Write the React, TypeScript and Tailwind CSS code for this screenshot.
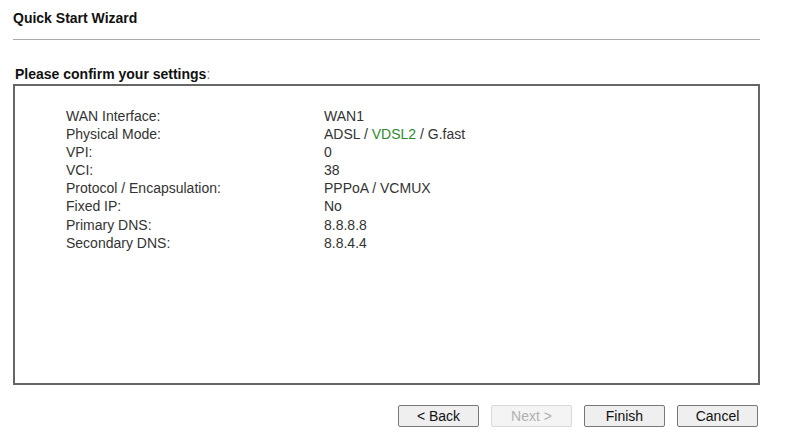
import React from "react";

const rows: { label: string; value: React.ReactNode }[] = [
  { label: "WAN Interface:", value: "WAN1" },
  {
    label: "Physical Mode:",
    value: (
      <>
        ADSL / <span className="text-[#2e8b2e]">VDSL2</span> / G.fast
      </>
    ),
  },
  { label: "VPI:", value: "0" },
  { label: "VCI:", value: "38" },
  { label: "Protocol / Encapsulation:", value: "PPPoA / VCMUX" },
  { label: "Fixed IP:", value: "No" },
  { label: "Primary DNS:", value: "8.8.8.8" },
  { label: "Secondary DNS:", value: "8.8.4.4" },
];

function Btn({ children, disabled }: { children: React.ReactNode; disabled?: boolean }) {
  return (
    <button
      disabled={disabled}
      className={
        disabled
          ? "h-[22px] w-[81px] rounded-[2px] border border-[#d8d8d8] bg-[#f4f4f4] text-[14px] text-[#b0b0b0]"
          : "h-[22px] w-[81px] rounded-[2px] border border-[#777] bg-[#efefef] text-[14px] text-[#111]"
      }
    >
      {children}
    </button>
  );
}

export default function App() {
  return (
    <div className="h-[436px] w-[803px] bg-white pl-[13px] pr-[43px] font-['Liberation_Sans',Arial,sans-serif]">
      <div className="pt-[10px] text-[14px] font-bold leading-[17px] text-[#111]">Quick Start Wizard</div>
      <div className="mt-[12px] h-px bg-[#aaa]" />
      <div className="mt-[26px] pl-[2px] text-[14px] font-bold leading-[16px] text-[#111]">
        Please confirm your settings<span className="font-normal text-[#777]">:</span>
      </div>
      <div className="mt-[2px] h-[301px] border-2 border-[#666] pl-[51px] pt-[21px] text-[14px] leading-[18.1px] text-[#333]">
        {rows.map((r) => (
          <div key={r.label} className="flex">
            <div className="w-[258px]">{r.label}</div>
            <div>{r.value}</div>
          </div>
        ))}
      </div>
      <div className="mt-[20px] flex justify-end gap-[12px] pr-[2px]">
        <Btn>&lt; Back</Btn>
        <Btn disabled>Next &gt;</Btn>
        <Btn>Finish</Btn>
        <Btn>Cancel</Btn>
      </div>
    </div>
  );
}
